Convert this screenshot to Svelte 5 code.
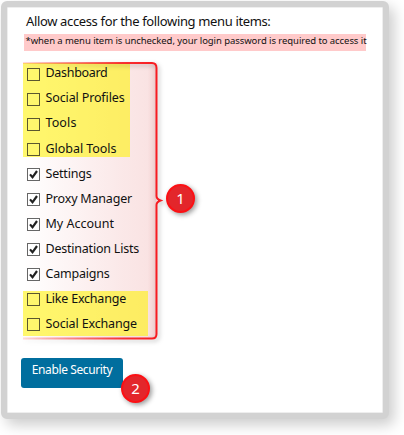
<script>
  const items = [
    { label: 'Dashboard', w: 62 },
    { label: 'Social Profiles', w: 79 },
    { label: 'Tools', w: 31 },
    { label: 'Global Tools', w: 71 },
    { label: 'Settings', w: 46, on: true },
    { label: 'Proxy Manager', w: 86.5, on: true },
    { label: 'My Account', w: 68.5, on: true },
    { label: 'Destination Lists', w: 93.5, on: true },
    { label: 'Campaigns', w: 64, on: true },
    { label: 'Like Exchange', w: 80.5 },
    { label: 'Social Exchange', w: 91.5 }
  ];

  // Spreads the letters of a line so that it fills the given width.
  function fit(node, width) {
    const natural = node.getBoundingClientRect().width;
    node.style.letterSpacing = (width - natural) / node.textContent.length + 'px';
  }
</script>

<main class="page">
  <section class="panel">
    <h1><span use:fit={244.5}>Allow access for the following menu items:</span></h1>
    <p class="note"><span use:fit={341}>*when a menu item is unchecked, your login password is required to access it</span></p>

    <div class="group">
      <svg class="bracket" width="150" height="290" viewBox="18 58 150 290" aria-hidden="true">
        <defs>
          <linearGradient id="fill" gradientUnits="userSpaceOnUse" x1="23" y1="0" x2="157" y2="0">
            <stop offset="0" stop-color="#d21414" stop-opacity="0" />
            <stop offset="0.75" stop-color="#d21414" stop-opacity="0.1" />
            <stop offset="0.93" stop-color="#d21414" stop-opacity="0.12" />
            <stop offset="1" stop-color="#b01c1c" stop-opacity="0.22" />
          </linearGradient>
          <linearGradient id="line" gradientUnits="userSpaceOnUse" x1="23" y1="0" x2="157" y2="0">
            <stop offset="0" stop-color="#f81b20" stop-opacity="0.15" />
            <stop offset="0.75" stop-color="#f81b20" stop-opacity="0.9" />
            <stop offset="1" stop-color="#f81b20" />
          </linearGradient>
        </defs>
        <path class="tint" d="M23 63H152Q156.500 63 156.500 68V334Q156.500 338.500 152 338.500H23Z" />
        <rect x="23" y="63" width="107" height="94" fill="#fff200" fill-opacity="0.57" />
        <rect x="23" y="291" width="125" height="45" fill="#fff200" fill-opacity="0.57" />
        <path class="edge" d="M23 63H152Q156.500 63 156.500 68V196Q156.500 199 160.500 200.500Q156.500 202 156.500 205V334Q156.500 338.500 152 338.500H23" />
      </svg>

      <ul>
        {#each items as item}
          <li>
            <span class="box">
              {#if item.on}
                <svg width="11" height="11" viewBox="0 0 11 11"><path d="M2 5.400L4.500 8.300L9 2" /></svg>
              {/if}
            </span>
            <span class="label" use:fit={item.w}>{item.label}</span>
          </li>
        {/each}
      </ul>
      <b class="badge one">1</b>
    </div>

    <div class="actions">
      <button type="button"><span use:fit={80.5}>Enable Security</span></button>
      <b class="badge two">2</b>
    </div>
  </section>
</main>

<style>
  :global(body) {
    background: #fff;
    overflow: hidden;
  }
  .page {
    box-sizing: border-box;
    width: 404px;
    height: 435px;
    padding: 1px;
    overflow: hidden;
    font-family: 'Noto Sans', 'Open Sans', sans-serif;
    color: #111;
  }
  .panel {
    box-sizing: border-box;
    width: 388px;
    height: 418px;
    border: 6px solid #d2d2d2;
    border-radius: 6px;
    background: #fff;
    box-shadow: 5px 6px 14px rgba(0, 0, 0, 0.2), inset 0 0 0 0.5px #ddd;
    padding: 4px 0 0 16px;
  }
  h1 {
    margin: 0 0 0 3px;
    height: 23px;
    font-size: 13px;
    line-height: 20px;
    font-weight: 400;
    white-space: nowrap;
  }
  .note {
    box-sizing: border-box;
    margin: 0 0 0 1px;
    width: 342px;
    height: 17px;
    padding-left: 1.5px;
    background: #ffcaca;
    font-size: 9.5px;
    line-height: 14px;
    white-space: nowrap;
  }
  .group {
    position: relative;
    height: 307px;
  }
  .bracket {
    position: absolute;
    left: -5px;
    top: 7px;
  }
  .tint {
    fill: url(#fill);
  }
  .edge {
    fill: none;
    stroke: url(#line);
    stroke-width: 2;
    filter: drop-shadow(2px 2px 2px rgba(0, 0, 0, 0.25));
  }
  ul {
    position: relative;
    list-style: none;
    margin: 0;
    padding: 10px 0 0 4px;
  }
  li {
    display: flex;
    align-items: flex-start;
    height: 25.05px;
    white-space: nowrap;
  }
  .box {
    box-sizing: border-box;
    width: 13px;
    height: 13px;
    margin: 7px 5.500px 0 0;
    border: 1px solid #5b572f;
  }
  .box:has(svg) {
    background: #fff;
    border-color: #666;
  }
  .box svg {
    display: block;
    fill: none;
    stroke: #222;
    stroke-width: 2.2;
  }
  .label {
    margin-top: 0.37px;
    font-size: 12.5px;
    line-height: 24px;
  }
  .badge {
    position: absolute;
    box-sizing: border-box;
    width: 29px;
    height: 29px;
    border: 2px solid #fc1014;
    border-radius: 50%;
    background: #e3262b;
    box-shadow: 2px 2px 5px rgba(0, 0, 0, 0.4);
    color: #fff;
    font-size: 15px;
    line-height: 24px;
    font-weight: 400;
    text-align: center;
  }
  .one {
    left: 143px;
    top: 133px;
  }
  .actions {
    position: relative;
    margin-left: -2px;
    height: 40px;
  }
  button {
    display: block;
    width: 102px;
    height: 30px;
    border: 0;
    border-radius: 3px;
    padding: 0 0 6px;
    background: #006e9e;
    color: #fff;
    font-family: inherit;
    font-size: 12px;
    line-height: 24px;
    white-space: nowrap;
  }
  .two {
    left: 100px;
    top: 16px;
  }
</style>
